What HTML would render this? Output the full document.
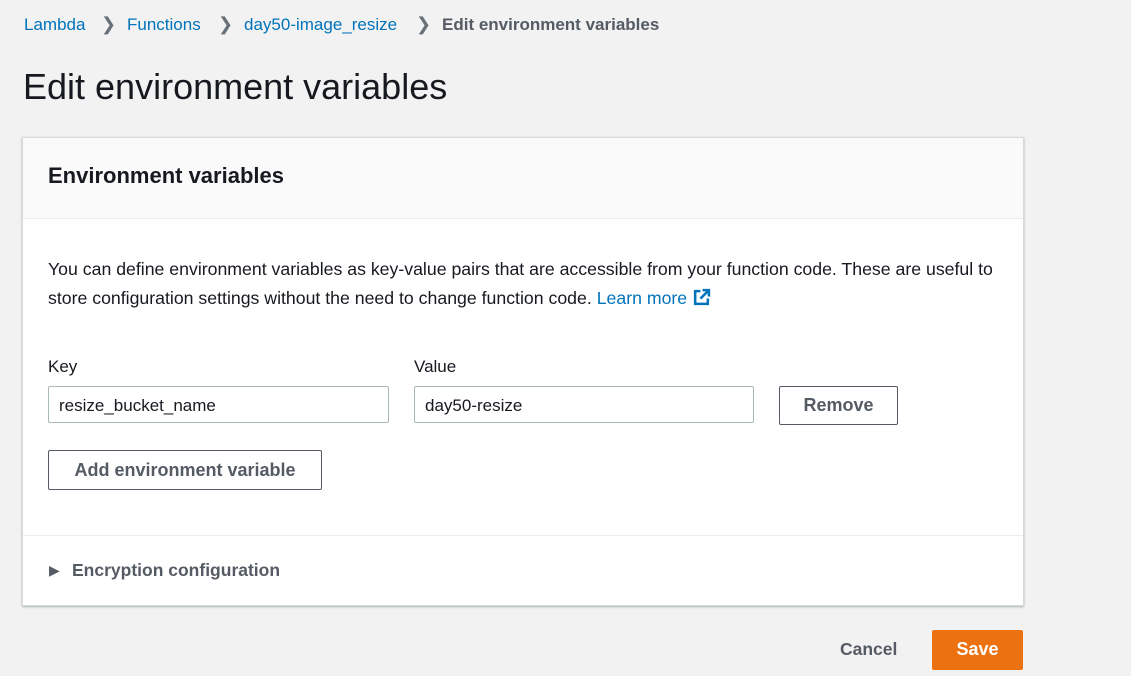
<!DOCTYPE html>
<html><head><style>
body{margin:0;width:1131px;height:676px;background:#f2f2f2;font-family:"Liberation Sans",sans-serif;position:relative;overflow:hidden;color:#16191f}
.a{position:absolute;white-space:nowrap}
.bc{top:15px;font-size:17px;color:#0073bb}
.sep{color:#687078;font-size:18px}
.card{position:absolute;left:22px;top:137px;width:1000px;height:467px;background:#fff;border:1px solid #d5dbdb;box-shadow:0 1px 2px rgba(0,28,36,.3)}
.hd{position:absolute;left:0;top:0;right:0;height:80px;background:#fafafa;border-bottom:1px solid #eaeded}
.in{position:absolute;height:37px;border:1px solid #aab7b8;border-radius:2px;box-sizing:border-box;font-size:17px;padding:9px 10px;color:#16191f}
.btn{position:absolute;box-sizing:border-box;border:1px solid #545b64;border-radius:2px;background:#fff;font-weight:bold;color:#545b64;font-size:18px;text-align:center}
</style></head><body>
<div class="a bc" style="left:24px">Lambda</div>
<div class="a sep" style="left:101px;top:14px">&#x276F;</div>
<div class="a bc" style="left:127px">Functions</div>
<div class="a sep" style="left:218px;top:14px">&#x276F;</div>
<div class="a bc" style="left:244px">day50-image_resize</div>
<div class="a sep" style="left:416px;top:14px">&#x276F;</div>
<div class="a bc" style="left:442px;color:#545b64;font-weight:bold">Edit environment variables</div>
<div class="a" style="left:23px;top:66px;font-size:36px;color:#16191f">Edit environment variables</div>
<div class="card">
<div class="hd"><div class="a" style="left:25px;top:25px;font-size:22px;font-weight:bold">Environment variables</div></div>
<div class="a" style="left:25px;top:117px;font-size:17.7px;line-height:29px;color:#16191f">You can define environment variables as key-value pairs that are accessible from your function code. These are useful to<br>store configuration settings without the need to change function code. <span style="color:#0073bb">Learn more <svg width="19" height="19" viewBox="0 0 18 18" style="vertical-align:-3px"><path d="M8 3H3v12h12v-5" fill="none" stroke="#0073bb" stroke-width="2.4"/><path d="M10 2h6v6M16 2L8 10" fill="none" stroke="#0073bb" stroke-width="2.4"/></svg></span></div>
<div class="a" style="left:25px;top:219px;font-size:17px">Key</div>
<div class="a" style="left:391px;top:219px;font-size:17px">Value</div>
<div class="in" style="left:25px;top:248px;width:341px">resize_bucket_name</div>
<div class="in" style="left:391px;top:248px;width:340px">day50-resize</div>
<div class="btn" style="left:756px;top:248px;width:119px;height:39px;line-height:37px">Remove</div>
<div class="btn" style="left:25px;top:312px;width:274px;height:40px;line-height:38px">Add environment variable</div>
<div style="position:absolute;left:0;right:0;top:397px;border-top:1px solid #eaeded"></div>
<div class="a" style="left:26px;top:424px;font-size:14px;color:#545b64">&#9654;</div>
<div class="a" style="left:49px;top:422px;font-size:17.5px;font-weight:bold;color:#545b64">Encryption configuration</div>
</div>
<div class="a" style="left:840px;top:639px;font-size:17.5px;font-weight:bold;color:#545b64">Cancel</div>
<div class="a" style="left:932px;top:630px;width:91px;height:40px;background:#ec7211;border-radius:2px;color:#fff;font-weight:bold;font-size:18px;text-align:center;line-height:39px">Save</div>
</body></html>
